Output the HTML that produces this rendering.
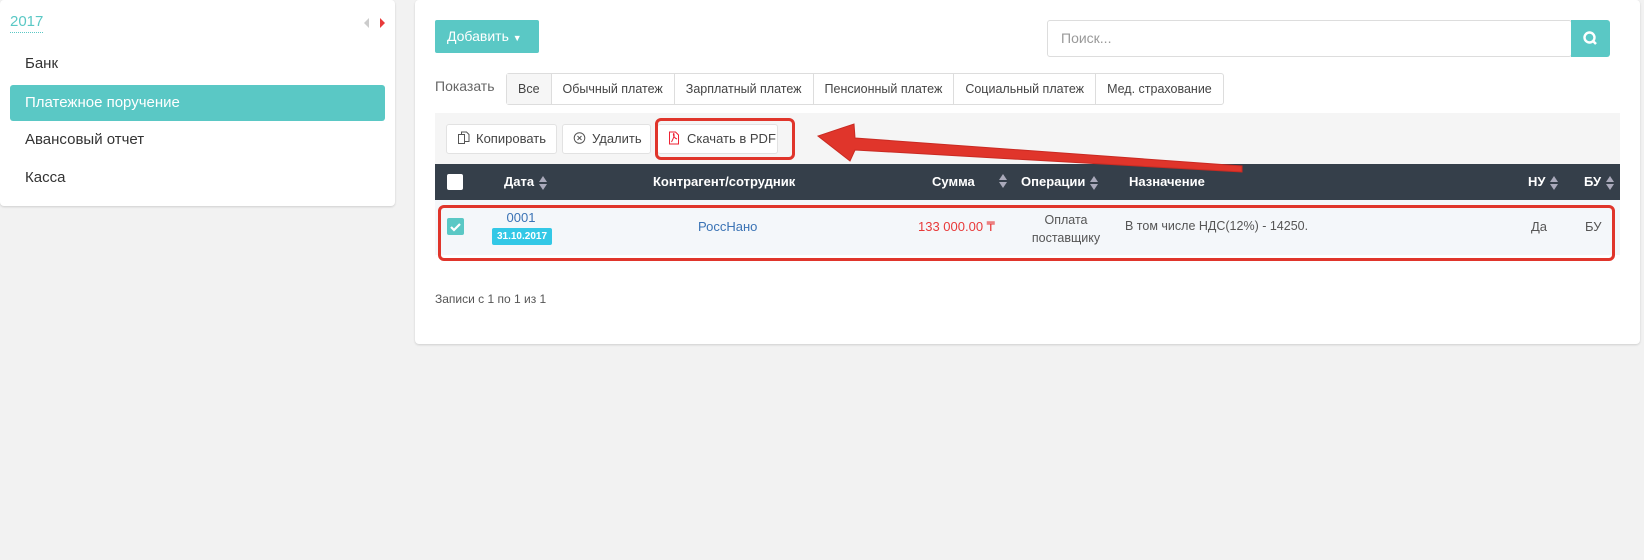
<!DOCTYPE html>
<html><head><meta charset="utf-8"><style>
*{box-sizing:border-box;margin:0;padding:0}
body{width:1644px;height:560px;background:#f2f2f2;font-family:"Liberation Sans",sans-serif;color:#333;position:relative;overflow:hidden;font-size:13px}
.a{position:absolute}
.panel{background:#fff;border-radius:4px;box-shadow:0 1px 2px rgba(0,0,0,.15)}
.th{color:#fff;font-weight:bold;font-size:13px;top:174px}
.sort{display:inline-block;width:8px;height:14px;vertical-align:middle;margin-left:5px}
.tab{height:30px;line-height:30px;padding:0 11px;border-right:1px solid #ddd;font-size:12.5px;color:#444;display:inline-block}
.btn{background:#fff;border:1px solid #e2e2e2;border-radius:3px;height:30px;line-height:28px;font-size:13px;color:#444;top:124px}
</style></head><body>
<div class="a panel" style="left:0;top:0;width:395px;height:206px"></div>
<div class="a" style="left:10px;top:12px;font-size:15px;color:#5ac8c5;border-bottom:1px dotted #5ac8c5;line-height:20px">2017</div>
<svg class="a" style="left:363px;top:17px" width="24" height="12"><path d="M6 1L1 6L6 11Z" fill="#ccc"/><path d="M17 1L22 6L17 11Z" fill="#e83a3a"/></svg>
<div class="a" style="left:25px;top:55px;font-size:15px">Банк</div>
<div class="a" style="left:10px;top:85px;width:375px;height:36px;background:#5ac8c5;border-radius:3px;color:#fff;font-size:15px;line-height:36px;padding-left:15px">Платежное поручение</div>
<div class="a" style="left:25px;top:131px;font-size:15px">Авансовый отчет</div>
<div class="a" style="left:25px;top:169px;font-size:15px">Касса</div>

<div class="a panel" style="left:415px;top:0;width:1225px;height:344px"></div>
<div class="a" style="left:435px;top:20px;width:104px;height:33px;background:#5ac8c5;border-radius:2px;color:#fff;font-size:14px;line-height:33px;padding-left:12px">Добавить <span style="font-size:9px">▼</span></div>
<div class="a" style="left:1047px;top:20px;width:525px;height:37px;border:1px solid #ddd;border-radius:3px;color:#999;font-size:14px;line-height:35px;padding-left:13px">Поиск...</div>
<div class="a" style="left:1571px;top:20px;width:39px;height:37px;background:#5ac8c5;border-radius:0 3px 3px 0"><svg width="39" height="37"><circle cx="18.5" cy="17.5" r="5" stroke="#fff" stroke-width="2.4" fill="none"/><path d="M22 21L25 24" stroke="#fff" stroke-width="2.6"/></svg></div>
<div class="a" style="left:435px;top:78px;font-size:14px;color:#666">Показать</div>
<div class="a" style="left:506px;top:73px;height:32px;border:1px solid #ddd;border-radius:3px;white-space:nowrap;background:#fff;font-size:0"><span class="tab" style="background:#f6f6f6;border-right:1px solid #ddd">Все</span><span class="tab">Обычный платеж</span><span class="tab">Зарплатный платеж</span><span class="tab">Пенсионный платеж</span><span class="tab">Социальный платеж</span><span class="tab" style="border:none">Мед. страхование</span></div>

<div class="a" style="left:435px;top:113px;width:1185px;height:51px;background:#f5f5f5"></div>
<div class="a btn" style="left:446px;width:111px;padding-left:10px"><svg width="13" height="14" style="vertical-align:-2px;margin-right:6px"><path d="M1.5 3.5h6v9h-6zM4.5 3.5V1h5l2.5 2.5V10.5H7.5" stroke="#555" fill="none"/></svg>Копировать</div>
<div class="a btn" style="left:562px;width:89px;padding-left:10px"><svg width="13" height="14" style="vertical-align:-2px;margin-right:6px"><circle cx="6.5" cy="7" r="5.3" stroke="#555" fill="none"/><path d="M4.5 5l4 4M8.5 5l-4 4" stroke="#555"/></svg>Удалить</div>
<div class="a btn" style="left:657px;width:121px;padding-left:10px"><svg width="12" height="14" style="vertical-align:-2px;margin-right:7px"><path d="M1.5 1h6l3 3v9h-9z" stroke="#e23" fill="none"/><path d="M3.5 11c2-4 3-6 2.5-8s-2 3 3 5" stroke="#e23" fill="none"/></svg>Скачать в PDF</div>
<div class="a" style="left:655px;top:118px;width:140px;height:42px;border:3px solid #e0352b;border-radius:6px"></div>

<div class="a" style="left:435px;top:164px;width:1185px;height:36px;background:#353f4a"></div>
<div class="a" style="left:447px;top:174px;width:16px;height:16px;background:#fff;border-radius:2px"></div>
<svg width="0" height="0" style="position:absolute"><defs><g id="s"><path d="M4 0L8 6H0Z M4 14L8 8H0Z" fill="#aab"/></g></defs></svg>
<div class="a th" style="left:504px">Дата<svg class="sort"><use href="#s"/></svg></div>
<div class="a th" style="left:653px">Контрагент/сотрудник</div>
<div class="a th" style="left:932px">Сумма</div><svg class="a sort" style="left:994px;top:174px"><use href="#s"/></svg>
<div class="a th" style="left:1021px">Операции<svg class="sort"><use href="#s"/></svg></div>
<div class="a th" style="left:1129px">Назначение</div>
<div class="a th" style="left:1528px">НУ<svg class="sort"><use href="#s"/></svg></div>
<div class="a th" style="left:1584px">БУ<svg class="sort"><use href="#s"/></svg></div>

<div class="a" style="left:435px;top:200px;width:1185px;height:55px;background:#f4f7fa"></div>
<div class="a" style="left:447px;top:218px;width:17px;height:17px;background:#5ac8c5;border-radius:2px"><svg width="17" height="17"><path d="M4 9l3 3 6-6" stroke="#fff" stroke-width="2.2" fill="none"/></svg></div>
<div class="a" style="left:491px;top:210px;width:60px;text-align:center;color:#3a73b5;font-size:13px">0001</div>
<div class="a" style="left:492px;top:228px;width:60px;height:17px;background:#33c8e6;border-radius:2px;color:#fff;font-size:10px;font-weight:bold;text-align:center;line-height:17px">31.10.2017</div>
<div class="a" style="left:698px;top:219px;color:#3a73b5;font-size:13px">РоссНано</div>
<div class="a" style="left:918px;top:219px;color:#e83a3a;font-size:13px">133 000.00 ₸</div>
<div class="a" style="left:1018px;top:211px;width:96px;text-align:center;color:#555;font-size:12.5px;line-height:18px">Оплата<br>поставщику</div>
<div class="a" style="left:1125px;top:219px;color:#555;font-size:12.5px">В том числе НДС(12%) - 14250.</div>
<div class="a" style="left:1531px;top:219px;color:#555">Да</div>
<div class="a" style="left:1585px;top:219px;color:#555">БУ</div>
<div class="a" style="left:438px;top:205px;width:1177px;height:56px;border:3px solid #e0352b;border-radius:6px"></div>

<div class="a" style="left:435px;top:292px;font-size:12px;color:#555">Записи с 1 по 1 из 1</div>

<svg class="a" style="left:0;top:0" width="1644" height="560"><path d="M1242 166L1242 172L855 150L850 161L818 136L854 124L855 138Z" fill="#e0352b" stroke="#c92a22" stroke-width="1"/></svg>
</body></html>
